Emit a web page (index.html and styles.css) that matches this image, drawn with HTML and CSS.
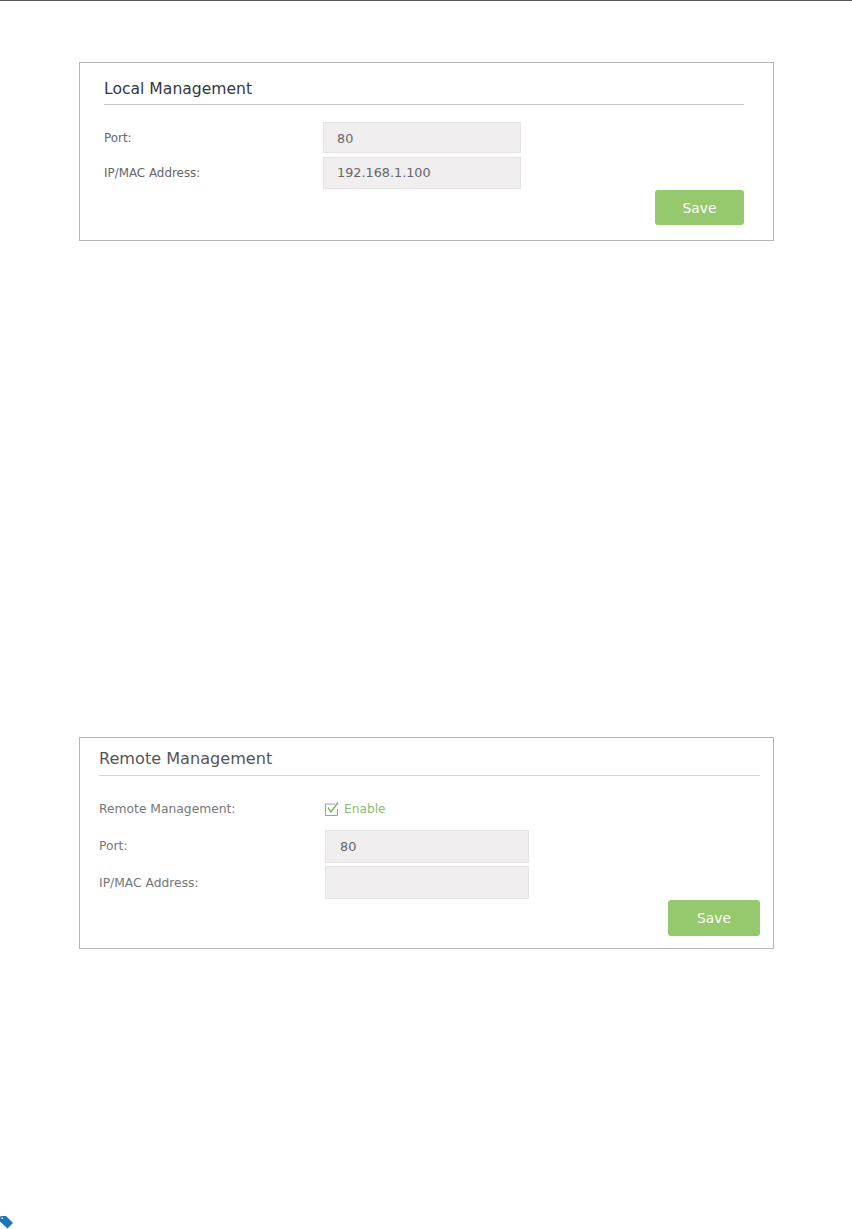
FILE: index.html
```html
<!DOCTYPE html>
<html lang="en">
<head>
  <meta charset="UTF-8">
  <title>Local and Remote Management</title>
  <link rel="stylesheet" href="styles.css">
</head>
<body>

<div class="page">

  <!-- Local Management -->
  <section class="card card-local">
    <h2>Local Management</h2>
    <div class="row row-port">
      <label>Port:</label>
      <div class="field">80</div>
    </div>
    <div class="row row-ip">
      <label>IP/MAC Address:</label>
      <div class="field">192.168.1.100</div>
    </div>
    <div class="actions">
      <button>Save</button>
    </div>
  </section>

  <!-- Remote Management -->
  <section class="card card-remote">
    <h2>Remote Management</h2>
    <div class="row row-check">
      <label>Remote Management:</label>
      <span class="check">
        <svg width="14" height="14" viewBox="0 0 14 14">
          <path d="M10 2 H0.5 V13.5 H12.5 V7" fill="none" stroke="#a0a0a0"/>
          <path d="M3 5.5 L6 10 L13 0.5" fill="none" stroke="#7fb765" stroke-width="1.4"/>
        </svg>
        Enable
      </span>
    </div>
    <div class="row row-port">
      <label>Port:</label>
      <div class="field">80</div>
    </div>
    <div class="row row-ip">
      <label>IP/MAC Address:</label>
      <div class="field"></div>
    </div>
    <div class="actions">
      <button>Save</button>
    </div>
  </section>

  <div class="tag">
    <svg width="14" height="13" viewBox="0 0 14 13">
      <path d="M0 1 L1 0 L6 0 L13 7 L7.5 12.5 L0 5.5 Z" fill="#1b75bc"/>
      <circle cx="2.2" cy="2.2" r="0.9" fill="#ffffff"/>
    </svg>
  </div>

</div>

</body>
</html>
```

FILE: styles.css
```css
body {
  margin: 0;
  background: #ffffff;
  font-family: "DejaVu Sans", Verdana, sans-serif;
  color: #5f5f5f;
}

.page {
  border-top: 1px solid #555555;
  padding-top: 61px;
}

.card {
  box-sizing: border-box;
  width: 695px;
  margin-left: 79px;
  border: 1px solid #b4b4b4;
}

.card h2 {
  margin: 0;
  font-weight: normal;
  line-height: 20px;
  border-bottom: 1px solid #c8c8c8;
}

.row {
  display: flex;
  align-items: center;
}

.row label {
  font-size: 11.9px;
  color: #666666;
}

.field {
  box-sizing: border-box;
  background: #f0eeef;
  border: 1px solid #e4e4e4;
  font-size: 12.8px;
  color: #666666;
}

.actions {
  display: flex;
  justify-content: flex-end;
}

button {
  border: none;
  border-radius: 3px;
  background: #96c86e;
  color: #ffffff;
  font-family: inherit;
  font-size: 13.8px;
  padding: 0;
}

/* first card */
.card-local {
  height: 179px;
  padding: 16px 29px 0 24px;
}

.card-local h2 {
  padding-bottom: 5px;
  font-size: 15.6px;
  color: #33393f;
}

.card-local .row label {
  width: 219px;
}

.card-local .field {
  width: 198px;
  height: 31px;
  padding-left: 13px;
  line-height: 31px;
}

.card-local .row-port {
  margin-top: 17px;
}

.card-local .row-ip {
  margin-top: 4px;
}

.card-local .row-ip .field {
  height: 32px;
  line-height: 30px;
}

.card-local .actions {
  margin-top: 1px;
}

.card-local button {
  width: 89px;
  height: 35px;
}

/* second card */
.card-remote {
  height: 212px;
  margin-top: 496px;
  padding: 11px 13px 0 19px;
}

.card-remote h2 {
  padding-bottom: 6px;
  font-size: 16.1px;
  color: #555555;
  border-bottom-color: #d8d8d8;
}

.card-remote .row label {
  width: 226px;
  font-size: 12.3px;
  color: #777777;
}

.card-remote .field {
  width: 204px;
  height: 33px;
  padding-left: 14px;
  line-height: 32px;
}

.row-check {
  margin-top: 23px;
  height: 20px;
}

.check {
  display: flex;
  align-items: center;
  gap: 5px;
  font-size: 12.2px;
  color: #8dbb74;
}

.card-remote .row-port {
  margin-top: 11px;
}

.card-remote .row-port label {
  margin-top: -2px;
}

.card-remote .row-ip {
  margin-top: 3px;
}

.card-remote .actions {
  margin-top: 1px;
}

.card-remote button {
  width: 92px;
  height: 36px;
}

.tag {
  margin-top: 267px;
  height: 13px;
  line-height: 0;
}
```
